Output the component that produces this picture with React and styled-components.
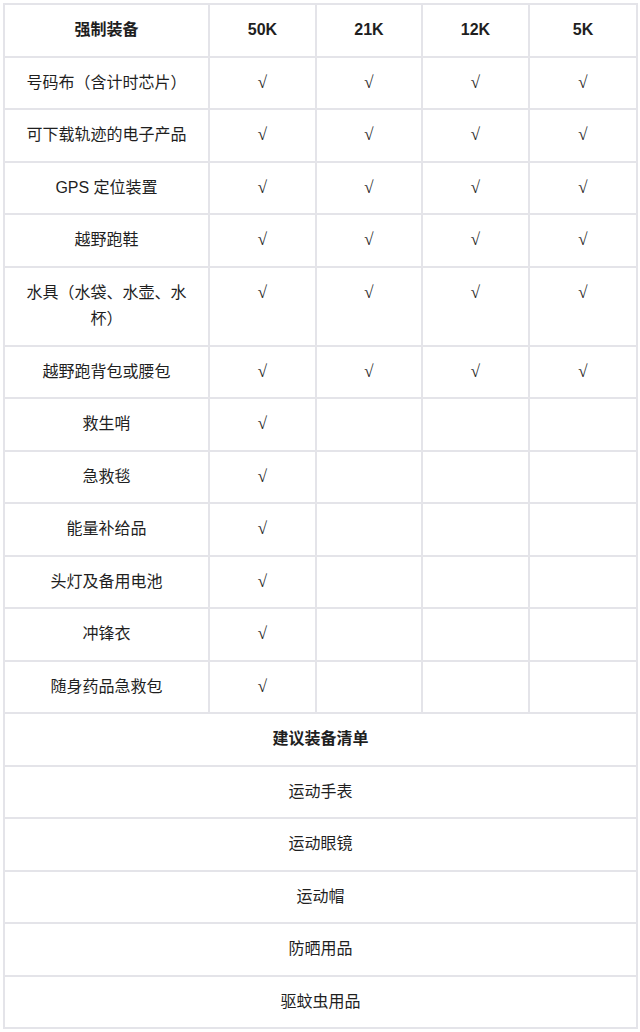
import React from "react";
import styled, { createGlobalStyle } from "styled-components";

const GlobalStyle = createGlobalStyle`
  body {
    margin: 0;
    background: #ffffff;
    font-family: "Liberation Sans", "Noto Sans CJK SC", sans-serif;
    color: #222222;
  }
`;

const Wrapper = styled.div`
  padding: 3px 3px 0 3px;
`;

const Table = styled.table`
  width: 633px;
  border-collapse: collapse;
  table-layout: fixed;
  font-size: 16px;
  line-height: 26.5px;
`;

const Col = styled.col`
  width: ${(p) => p.$w}px;
`;

const Cell = styled.td`
  border: 2px solid #e4e4e9;
  padding: 12px 16px;
  text-align: center;
  vertical-align: top;
  font-weight: ${(p) => (p.$bold ? 700 : 400)};
  color: #1f1f1f;
`;

const Check = styled.span`
  font-family: "Liberation Serif", "DejaVu Serif", serif;
  font-size: 17px;
  color: #2a2a2a;
`;

const distances = ["50K", "21K", "12K", "5K"];
const widths = [205, 107, 106, 107, 108];

const required = [
  { name: "号码布（含计时芯片）", all: true },
  { name: "可下载轨迹的电子产品", all: true },
  { name: "GPS 定位装置", all: true },
  { name: "越野跑鞋", all: true },
  { name: "水具（水袋、水壶、水杯）", all: true },
  { name: "越野跑背包或腰包", all: true },
  { name: "救生哨" },
  { name: "急救毯" },
  { name: "能量补给品" },
  { name: "头灯及备用电池" },
  { name: "冲锋衣" },
  { name: "随身药品急救包" },
];

const suggested = ["运动手表", "运动眼镜", "运动帽", "防晒用品", "驱蚊虫用品"];

const App = () => {
  return (
    <Wrapper>
      <GlobalStyle />
      <Table>
        <colgroup>
          {widths.map((w, i) => (
            <Col key={i} $w={w} />
          ))}
        </colgroup>
        <tbody>
          <tr>
            <Cell $bold>强制装备</Cell>
            {distances.map((d) => (
              <Cell $bold key={d}>
                {d}
              </Cell>
            ))}
          </tr>
          {required.map((item) => (
            <tr key={item.name}>
              <Cell>{item.name}</Cell>
              {distances.map((d, i) => (
                <Cell key={d}>
                  {(item.all || i === 0) && <Check>√</Check>}
                </Cell>
              ))}
            </tr>
          ))}
          <tr>
            <Cell $bold colSpan={5}>
              建议装备清单
            </Cell>
          </tr>
          {suggested.map((s) => (
            <tr key={s}>
              <Cell colSpan={5}>{s}</Cell>
            </tr>
          ))}
        </tbody>
      </Table>
    </Wrapper>
  );
};

export default App;
